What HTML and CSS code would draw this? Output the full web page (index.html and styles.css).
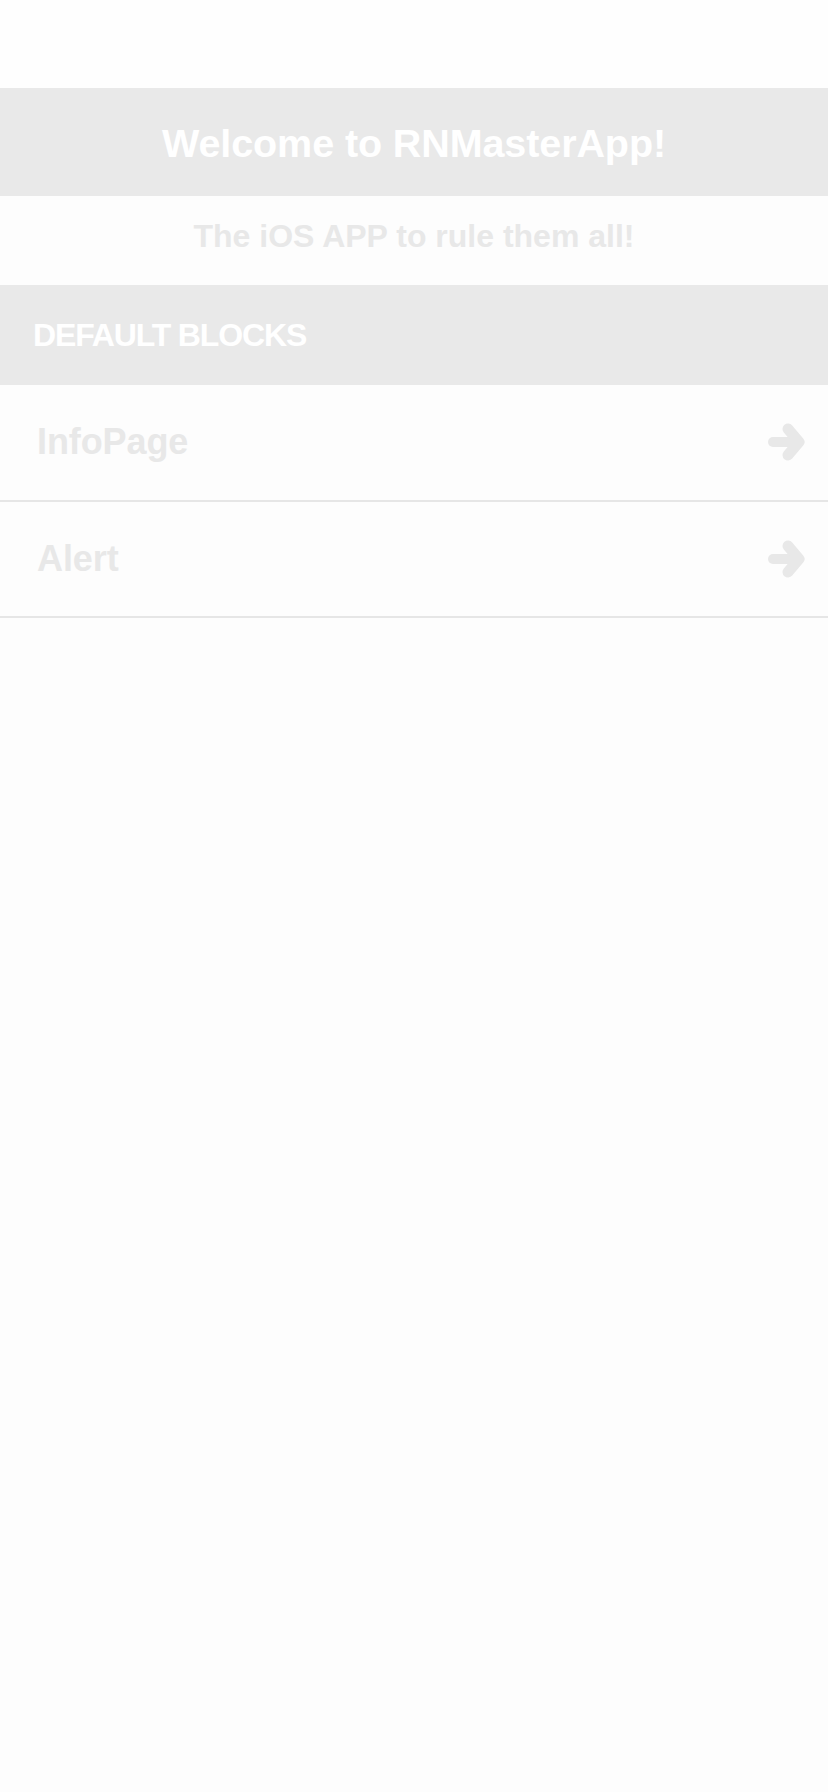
FILE: index.html
```html
<!DOCTYPE html>
<html lang="en">
<head>
<meta charset="utf-8">
<title>RNMasterApp</title>
<link rel="stylesheet" href="styles.css">
</head>
<body>
  <div class="status"></div>
  <header class="title-bar">
    <h1 class="title">Welcome to RNMasterApp!</h1>
  </header>
  <div class="subtitle-bar">
    <p class="subtitle">The iOS APP to rule them all!</p>
  </div>
  <div class="section-header">DEFAULT BLOCKS</div>
  <ul class="list">
    <li class="row">
      <span class="row-label">InfoPage</span>
      <svg class="arrow" viewBox="0 0 40 40" width="40" height="40" aria-hidden="true">
        <line x1="7" y1="20" x2="26" y2="20" />
        <polyline points="22,7 33,20 22,33" />
      </svg>
    </li>
    <li class="row">
      <span class="row-label">Alert</span>
      <svg class="arrow" viewBox="0 0 40 40" width="40" height="40" aria-hidden="true">
        <line x1="7" y1="20" x2="26" y2="20" />
        <polyline points="22,7 33,20 22,33" />
      </svg>
    </li>
  </ul>
</body>
</html>
```

FILE: styles.css
```css
html, body {
  margin: 0;
  padding: 0;
}

body {
  width: 828px;
  min-height: 1792px;
  background: #fdfdfd;
  font-family: "Liberation Sans", Arial, sans-serif;
  font-weight: 700;
}

.status {
  height: 88px;
  background: #fefefe;
}

.title-bar {
  height: 108px;
  background: #e9e9e9;
  display: flex;
  align-items: center;
  justify-content: center;
}

.title {
  margin: 0;
  padding-top: 1px;
  font-size: 39.5px;
  line-height: 44px;
  color: #ffffff;
  letter-spacing: -0.1px;
}

.subtitle-bar {
  height: 89px;
  box-sizing: border-box;
  padding-top: 22px;
  background: #fdfdfd;
}

.subtitle {
  margin: 0;
  text-align: center;
  font-size: 32px;
  line-height: 36px;
  color: #e8e8e8;
}

.section-header {
  height: 100px;
  box-sizing: border-box;
  background: #e9e9e9;
  display: flex;
  align-items: center;
  padding-left: 33px;
  font-size: 32px;
  line-height: 36px;
  letter-spacing: -1.15px;
  color: #ffffff;
}

.list {
  list-style: none;
  margin: 0;
  padding: 0;
}

.row {
  height: 116.5px;
  box-sizing: border-box;
  border-bottom: 2px solid #e6e6e6;
  background: #fdfdfd;
  display: flex;
  align-items: center;
  justify-content: space-between;
  padding: 0 22px 0 37px;
}

.row-label {
  font-size: 36px;
  line-height: 40px;
  color: #e8e8e8;
  letter-spacing: -0.1px;
}

.arrow {
  display: block;
  fill: none;
  stroke: #e8e8e8;
  stroke-linecap: round;
  stroke-linejoin: round;
}

.arrow line {
  stroke-width: 10;
}

.arrow polyline {
  stroke-width: 11;
}
```
